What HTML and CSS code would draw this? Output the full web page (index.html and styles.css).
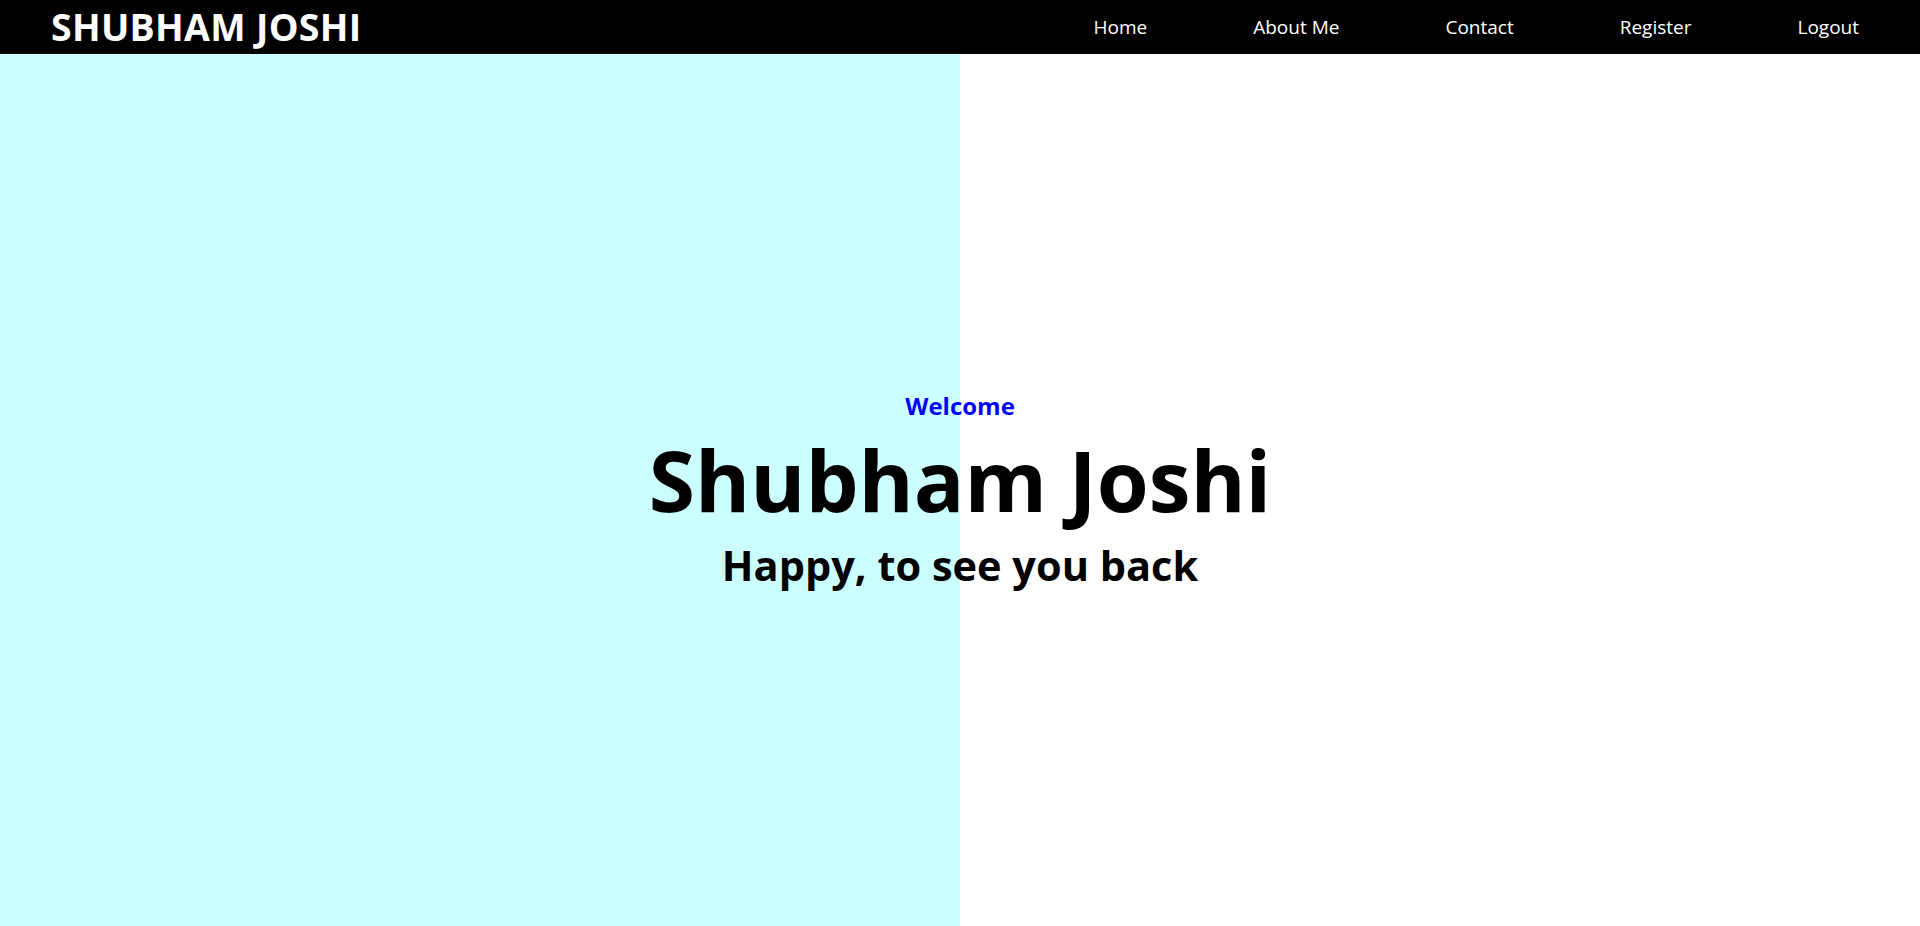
FILE: index.html
```html
<!DOCTYPE html>
<html lang="en">
<head>
<meta charset="utf-8">
<title>Shubham Joshi</title>
<link rel="stylesheet" href="styles.css">
</head>
<body>
<header class="navbar">
  <div class="brand">SHUBHAM JOSHI</div>
  <nav class="nav-links">
    <a href="#" class="nav-link">Home</a>
    <a href="#" class="nav-link">About Me</a>
    <a href="#" class="nav-link">Contact</a>
    <a href="#" class="nav-link">Register</a>
    <a href="#" class="nav-link">Logout</a>
  </nav>
</header>
<main class="hero">
  <div class="hero-content">
    <p class="welcome">Welcome</p>
    <h1 class="name">Shubham Joshi</h1>
    <h2 class="tagline">Happy, to see you back</h2>
  </div>
</main>
</body>
</html>
```
FILE: styles.css
```css
* { box-sizing: border-box; }
html, body { margin: 0; padding: 0; }
body {
  font-family: "Open Sans", "Noto Sans", sans-serif;
  background: #fff;
  height: 926px;
  overflow: hidden;
}
.navbar {
  height: 54px;
  background: #000;
  display: flex;
  align-items: center;
  justify-content: space-between;
  padding: 0 61px 0 51px;
}
.brand {
  color: #fff;
  font-weight: 700;
  font-size: 37.5px;
  line-height: 1;
  letter-spacing: 0.3px;
}
.nav-links {
  display: flex;
  gap: 106px;
}
.nav-link {
  color: #fff;
  text-decoration: none;
  font-size: 19px;
  line-height: 1;
}
.hero {
  height: 872px;
  background: linear-gradient(to right, #ccffff 0, #ccffff 50%, #ffffff 50%, #ffffff 100%);
  display: flex;
  align-items: center;
  justify-content: center;
}
.hero-content {
  text-align: center;
  display: flex;
  flex-direction: column;
  align-items: center;
}
.welcome {
  margin: 0;
  color: #0000ff;
  font-weight: 700;
  font-size: 24px;
  line-height: 1;
}
.name {
  margin: 20px 0 0;
  color: #000;
  font-weight: 700;
  font-size: 84px;
  line-height: 1;
}
.tagline {
  margin: 23px 0 0;
  color: #000;
  font-weight: 700;
  font-size: 41.5px;
  line-height: 1;
}
```
